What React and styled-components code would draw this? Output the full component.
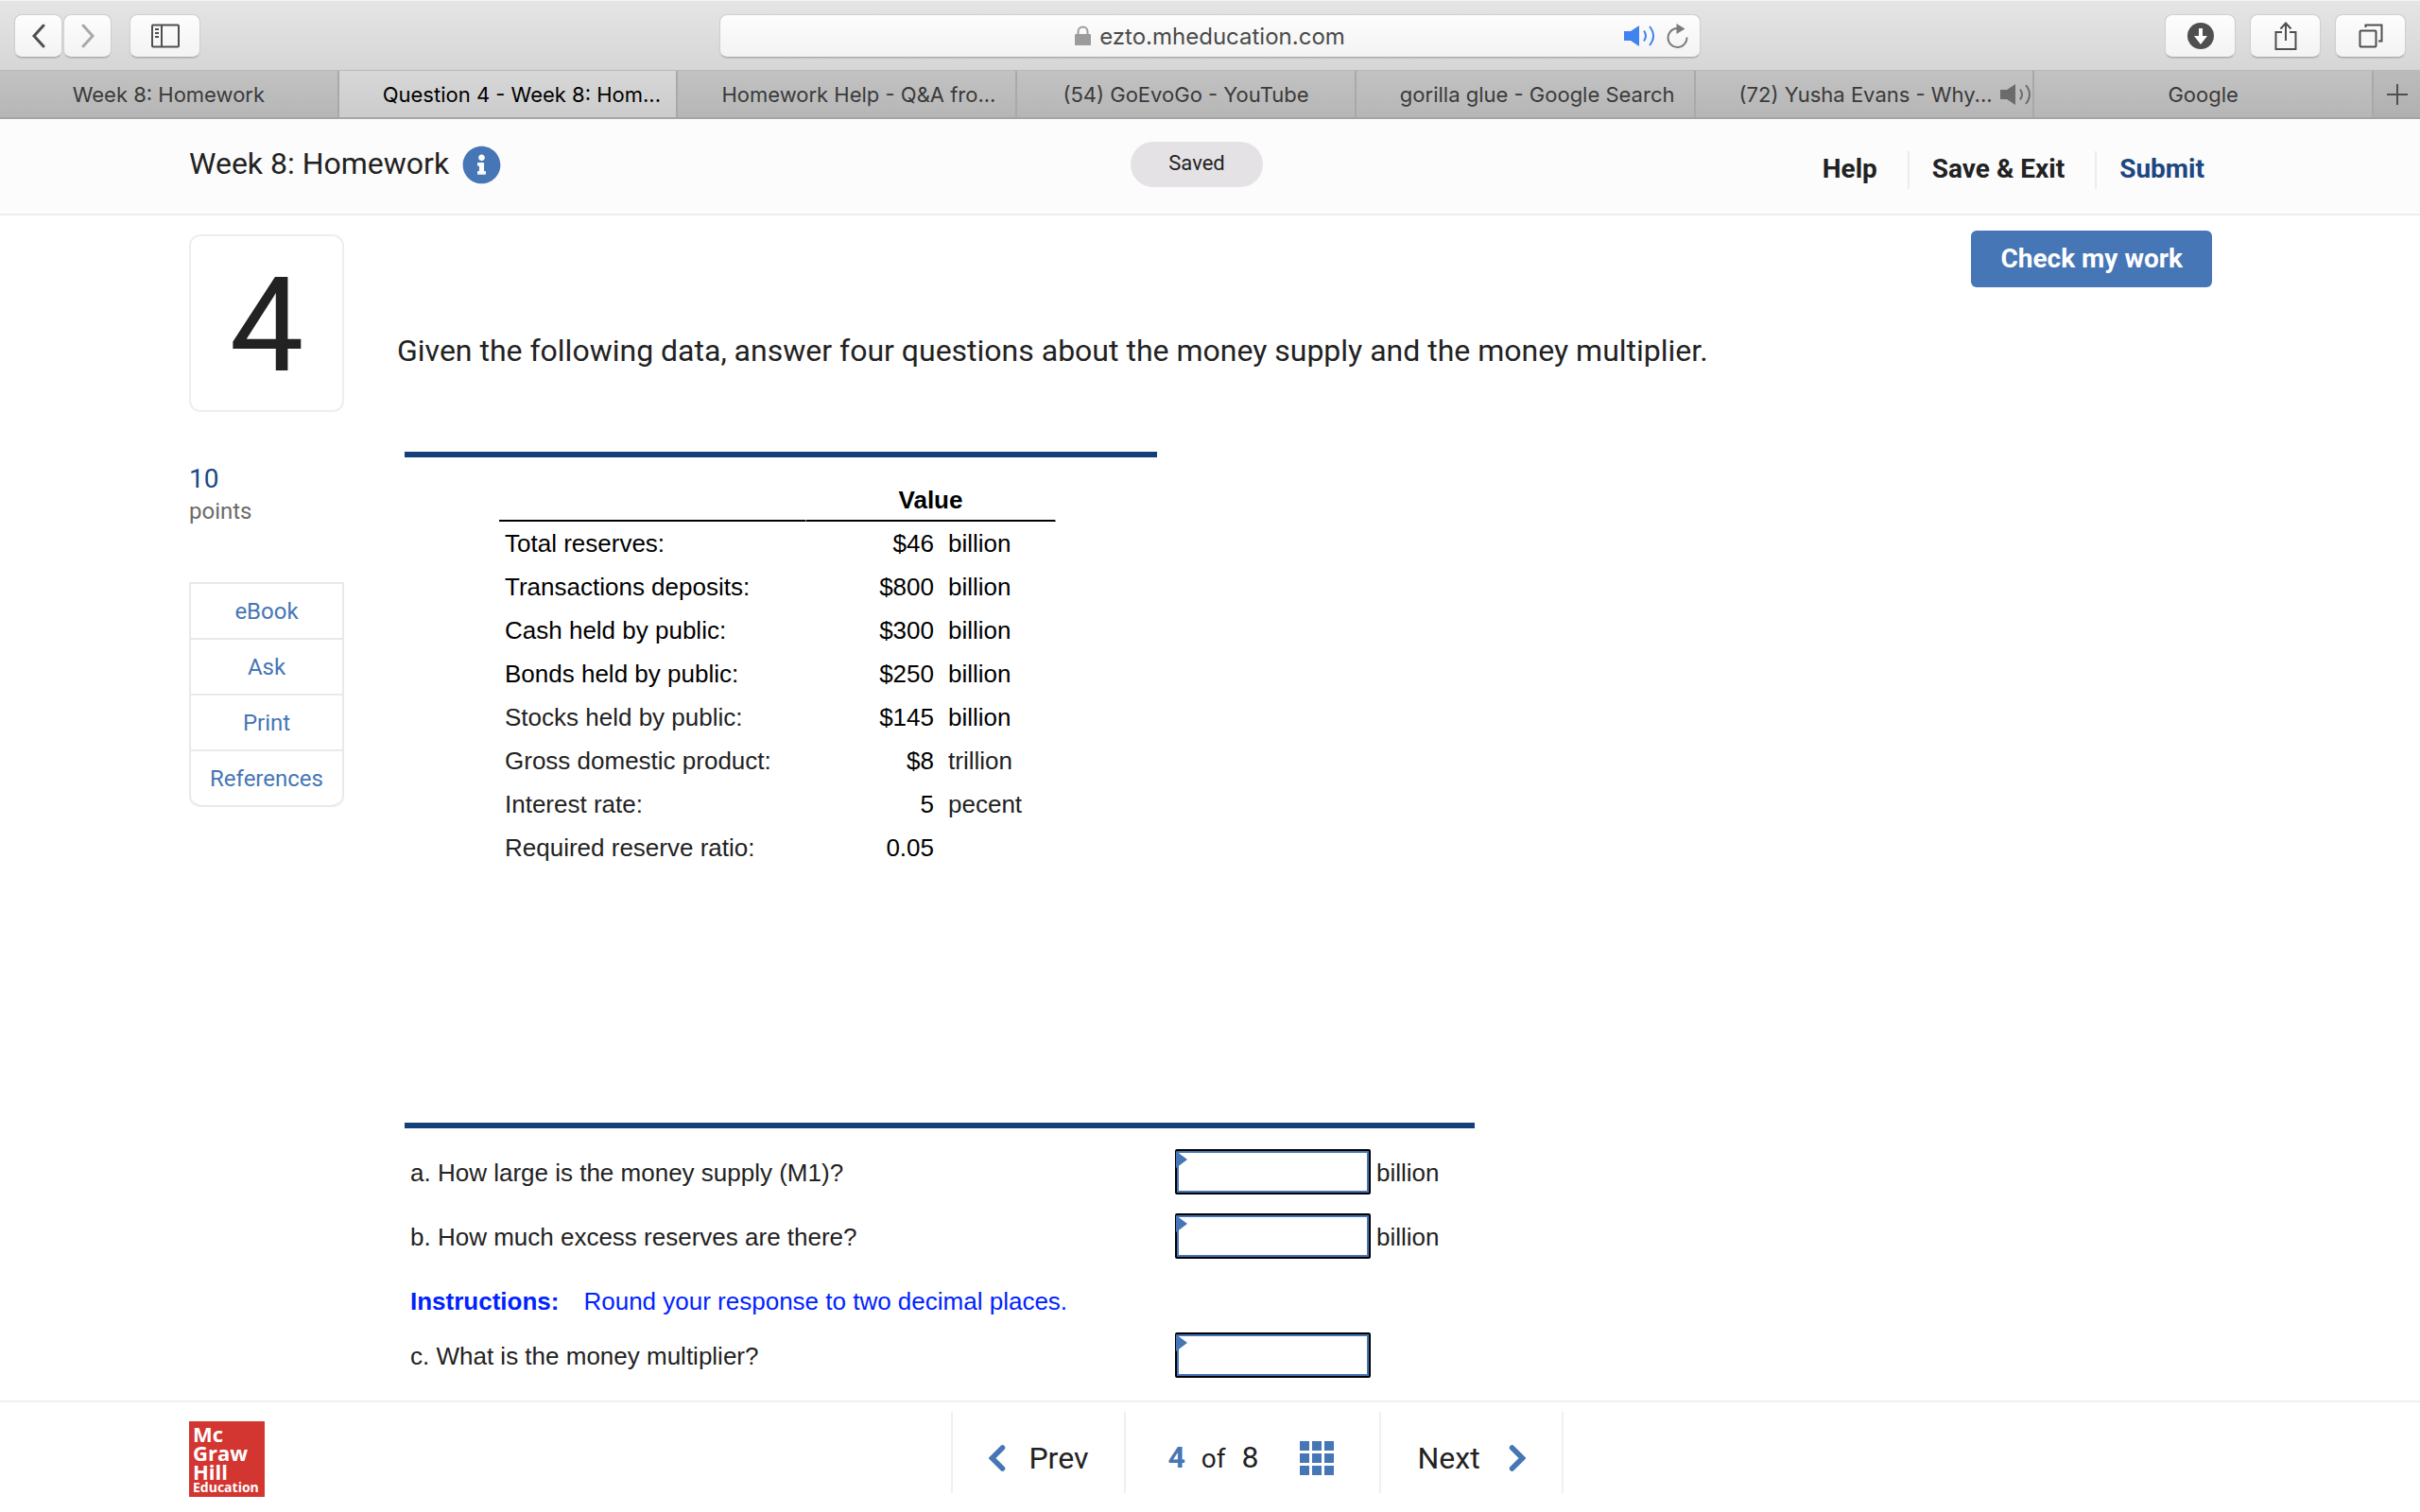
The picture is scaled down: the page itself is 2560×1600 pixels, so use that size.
import React from "react";
import styled, { createGlobalStyle, css } from "styled-components";
import { FaInfoCircle } from "react-icons/fa";

const GlobalStyle = createGlobalStyle`
  * {
    box-sizing: border-box;
  }

  body {
    margin: 0;
    background: #fff;
    color: #222;
    font-family: Roboto, "Liberation Sans", sans-serif;
  }

  button,
  input {
    font: inherit;
    color: inherit;
  }
`;

const Page = styled.div`
  display: flex;
  flex-direction: column;
  min-height: 100vh;
`;

/* ---------- browser bar ---------- */

const Toolbar = styled.div`
  display: grid;
  grid-template-columns: 1fr 41% 1fr;
  align-items: center;
  height: 75px;
  padding: 0 15px;
  background: linear-gradient(#e5e5e5, #d6d6d6);
  border-top: 1px solid #f4f4f4;
  border-bottom: 1px solid #b9b9b9;
  font-family: Inter, sans-serif;
`;

const ToolGroup = styled.div`
  display: flex;
  gap: ${(props) => props.$gap};
  justify-content: ${(props) => (props.$end ? "flex-end" : "flex-start")};
`;

const raised = css`
  height: 46px;
  background: linear-gradient(#fdfdfd, #f3f3f3);
  border: 1px solid #cfcfcf;
  border-bottom-color: #a8a8a8;
  border-radius: 8px;
  box-shadow: 0 1px 1px rgba(0, 0, 0, 0.1);
`;

const ToolButton = styled.button`
  ${raised}
  display: flex;
  align-items: center;
  justify-content: center;
  width: ${(props) => (props.$narrow ? "51px" : "75px")};
  padding: 0;
  color: ${(props) => (props.$dim ? "#a9a9a9" : "#4f4f4f")};
`;

const AddressBar = styled.div`
  ${raised}
  display: grid;
  grid-template-columns: 1fr auto 1fr;
  align-items: center;
  padding: 0 12px;
  font-size: 24px;
  color: #4a4a4a;
`;

const Address = styled.div`
  display: flex;
  grid-column: 2;
  align-items: center;
  gap: 9px;

  span {
    padding-top: 2px;
  }
`;

const AddressTools = styled.div`
  display: flex;
  align-items: center;
  justify-content: flex-end;
  gap: 12px;
`;

const TabBar = styled.div`
  display: grid;
  grid-template-columns: repeat(7, minmax(0, 1fr)) 49px;
  height: 51px;
  background: linear-gradient(#c2c2c2, #b6b6b6);
  border-bottom: 2px solid #a5a5a5;
  font: 22px Inter, sans-serif;
  color: #3a3a3a;
`;

const Tab = styled.a`
  display: flex;
  align-items: center;
  justify-content: ${(props) => (props.$long ? "flex-start" : "center")};
  gap: 8px;
  padding-left: ${(props) => (props.$long ? "46px" : "0")};
  border-right: 2px solid #a9a9a9;
  color: inherit;
  text-decoration: none;
  white-space: nowrap;
  overflow: hidden;

  ${(props) =>
    props.$active &&
    css`
      background: linear-gradient(#d7d7d7, #cccccc);
      color: #000;
    `}
`;

const NewTab = styled.button`
  display: flex;
  align-items: center;
  justify-content: center;
  padding: 0;
  background: rgba(0, 0, 0, 0.03);
  border: 0;
  color: #4f4f4f;
`;

/* ---------- assignment header ---------- */

const Header = styled.header`
  display: grid;
  grid-template-columns: 1fr auto 1fr;
  align-items: start;
  height: 102px;
  padding: 24px 228px 0 200px;
  background: #fcfcfc;
  border-bottom: 2px solid #eeeeee;
`;

const TitleGroup = styled.div`
  display: flex;
  align-items: center;
  gap: 14px;
  height: 48px;

  h1 {
    margin: 0;
    padding-bottom: 2px;
    font-size: 32px;
    font-weight: 400;
    line-height: 46px;
  }
`;

const InfoButton = styled.button`
  display: flex;
  padding: 0;
  background: none;
  border: 0;
  color: #4676b5;
`;

const Saved = styled.span`
  height: 48px;
  padding: 0 40px;
  background: #e4e2e5;
  border-radius: 24px;
  font-size: 22px;
  line-height: 46px;
`;

const HeaderNav = styled.nav`
  display: flex;
  align-items: center;
  justify-content: flex-end;
  height: 60px;
`;

const HeaderLink = styled.a`
  height: 40px;
  padding: 0 32px 0 24px;
  color: ${(props) => (props.$primary ? "#1c4782" : "#222")};
  font-size: 28px;
  font-weight: 700;
  line-height: 38px;
  text-decoration: none;

  & + & {
    border-left: 2px solid #ececec;
  }

  &:last-child {
    padding-right: 0;
  }
`;

/* ---------- question ---------- */

const Main = styled.main`
  display: flex;
  flex: 1;
  gap: 56px;
  padding: 0 220px 24px 200px;
`;

const Side = styled.aside`
  flex: none;
  width: 164px;
  padding-top: 20px;
`;

const QuestionNumber = styled.div`
  height: 188px;
  border: 2px solid #eeeeee;
  border-radius: 12px;
  font-size: 140px;
  line-height: 188px;
  text-align: center;
`;

const Points = styled.div`
  display: flex;
  flex-direction: column;
  margin: 54px 0 58px;
  font-size: 24px;
  line-height: 34px;
  color: #6b6b6b;

  strong {
    font-size: 28px;
    font-weight: 400;
    color: #1c4782;
  }
`;

const SideMenu = styled.nav`
  border: 2px solid #e9e9e9;
  border-bottom: 0;
  border-radius: 0 0 12px 12px;
`;

const SideLink = styled.a`
  display: block;
  height: 59px;
  border-bottom: 2px solid #e9e9e9;
  color: #4676b5;
  font-size: 24px;
  line-height: 58px;
  text-align: center;
  text-decoration: none;

  &:last-child {
    border-radius: 0 0 12px 12px;
  }
`;

const Content = styled.section`
  flex: 1;
  font: 26px "Liberation Sans", Arial, sans-serif;
`;

const Actions = styled.div`
  display: flex;
  justify-content: flex-end;
  padding-top: 16px;
`;

const CheckButton = styled.button`
  height: 60px;
  padding: 0 31px 2px;
  background: #4676b5;
  border: 0;
  border-radius: 6px;
  color: #fff;
  font: 700 28px Roboto, sans-serif;
`;

const Prompt = styled.p`
  margin: 43px 0 83px;
  font: 32px/48px Roboto, sans-serif;
`;

const Rule = styled.hr`
  width: 100%;
  max-width: ${(props) => props.$width};
  height: 6px;
  margin: 0 0 0 8px;
  background: #143f7a;
  border: 0;
`;

const DataTable = styled.table`
  width: 589px;
  margin: 22px 0 268px 108px;
  border-spacing: 0;
  table-layout: fixed;
  color: #000;

  th,
  td {
    height: 46px;
    padding: 0;
    text-align: left;
  }

  thead th {
    padding-top: 2px;
    border-right: 1px solid #fff;
    border-bottom: 2px solid #000;
    text-align: center;
  }
`;

const RowLabel = styled.th`
  && {
    padding-left: 6px;
    font-weight: 400;
    color: ${(props) => (props.$soft ? "#222" : "#000")};
  }
`;

const Amount = styled.td`
  && {
    padding-right: 7px;
    text-align: right;
  }
`;

const Unit = styled.td`
  && {
    padding-left: 8px;
    color: ${(props) => (props.$soft ? "#222" : "#000")};
  }
`;

const Answers = styled.form`
  padding: 12px 0 0 14px;
`;

const AnswerRow = styled.div`
  display: flex;
  align-items: center;
  height: ${(props) => (props.$last ? "48px" : "68px")};
`;

const AnswerLabel = styled.label`
  width: 809px;
  padding-top: 2px;
`;

const AnswerUnit = styled.span`
  padding: 2px 0 0 6px;
`;

const Instructions = styled.p`
  display: flex;
  align-items: center;
  gap: 26px;
  height: 68px;
  margin: 0;
  padding-top: 2px;
  color: #0022ff;
`;

const Answer = styled.span`
  position: relative;

  /* blue flag in the corner of each blank */
  &::before {
    content: "";
    position: absolute;
    top: 2px;
    left: 1px;
    border: solid transparent;
    border-width: 9px 0 9px 12px;
    border-left-color: #4676b5;
  }

  input {
    display: block;
    width: 207px;
    height: 48px;
    padding: 0 12px;
    background: #fff;
    border: 2px solid #000;
    border-radius: 2px;
    box-shadow: inset 0 0 0 2px #4676b5;
    outline: 0;
  }
`;

/* ---------- footer ---------- */

const Footer = styled.footer`
  display: flex;
  align-items: flex-start;
  height: 118px;
  padding: 10px 180px 0 200px;
  border-top: 2px solid #f0f0f0;
`;

const Logo = styled.div`
  display: flex;
  flex-direction: column;
  width: 80px;
  height: 80px;
  margin-top: 10px;
  padding: 3px 0 0 4px;
  background: #d33531;
  color: #fff;
  font: 700 22px/20px "Open Sans", sans-serif;

  small {
    font-size: 14px;
    line-height: 14px;
  }
`;

const Pager = styled.nav`
  display: flex;
  flex: 1;
  justify-content: center;
`;

const PagerCell = styled.div`
  display: flex;
  align-items: center;
  gap: ${(props) => props.$gap};
  height: 86px;
  padding: 12px 38px 0;
  border-left: 2px solid #f0f0f0;
  font-size: 32px;

  &:last-child {
    border-right: 2px solid #f0f0f0;
  }
`;

const PagerLink = styled(PagerCell).attrs({ as: "a", href: "#" })`
  color: inherit;
  text-decoration: none;
`;

const Position = styled.span`
  display: flex;
  align-items: baseline;
  gap: 17px;
  padding: 0 0 2px 6px;

  b {
    color: #4676b5;
  }

  small {
    font-size: 28px;
  }
`;

const GridButton = styled.button`
  display: flex;
  margin-right: 10px;
  padding: 0;
  background: none;
  border: 0;
`;

/* ---------- icons ---------- */

const Arrow = ({ right }) => (
  <svg width="16" height="26" viewBox="0 0 16 26" fill="none" stroke="currentColor" strokeWidth="3">
    <path d={right ? "M3 2l10 11L3 24" : "M13 2L3 13l10 11"} strokeLinecap="round" />
  </svg>
);

const SidebarIcon = () => (
  <svg width="30" height="26" viewBox="0 0 30 26" fill="none" stroke="currentColor" strokeWidth="2">
    <rect x="1" y="1.5" width="28" height="23" rx="1" />
    <path d="M11 1.5v23M4 6h4M4 10h4M4 14h4" />
  </svg>
);

const DownloadIcon = () => (
  <svg width="28" height="28" viewBox="0 0 28 28">
    <circle cx="14" cy="14" r="14" fill="#4f4f4f" />
    <path d="M12 6h4v8h5l-7 9-7-9h5z" fill="#fff" />
  </svg>
);

const ShareIcon = () => (
  <svg width="24" height="30" viewBox="0 0 24 30" fill="none" stroke="currentColor" strokeWidth="2">
    <path d="M8 11H1.5v18h21V11H16M12 20V2M6.5 7.5L12 1.5l5.5 6" />
  </svg>
);

const WindowsIcon = () => (
  <svg width="26" height="26" viewBox="0 0 26 26" fill="none" stroke="currentColor" strokeWidth="2">
    <rect x="1.5" y="7.5" width="17" height="17" rx="1" />
    <path d="M7.5 4V1.5h17v17H21" />
  </svg>
);

const LockIcon = () => (
  <svg width="17" height="22" viewBox="0 0 17 22">
    <rect y="9" width="17" height="12" rx="1" fill="#9b9b9b" />
    <path d="M3.5 10V6.500a5 5 0 0 1 10 0V10" fill="none" stroke="#9b9b9b" strokeWidth="2" />
  </svg>
);

const SoundIcon = ({ color }) => (
  <svg width="33" height="24" viewBox="0 0 33 24" fill="none" stroke={color} strokeWidth="2">
    <path d="M0 7h7l9-6v22l-9-6H0z" fill={color} stroke="none" />
    <path d="M21 6.500q4 5.500 0 11M27 2q8 10 0 20" />
  </svg>
);

const ReloadIcon = () => (
  <svg width="23" height="26" viewBox="0 0 23 26">
    <path d="M11 5a10 10 0 1 0 10.500 9.500" fill="none" stroke="#7b7b7b" strokeWidth="2" />
    <path d="M10.500 0l9 5.500-9 5.500z" fill="#7b7b7b" />
  </svg>
);

const PlusIcon = () => (
  <svg width="22" height="22" viewBox="0 0 22 22" stroke="currentColor" strokeWidth="2">
    <path d="M11 0v22M0 11h22" />
  </svg>
);

const Chevron = ({ right }) => (
  <svg width="18" height="28" viewBox="0 0 18 28" fill="none" stroke="#4676b5" strokeWidth="5.5">
    <path d={right ? "M3.500 3L14.500 14 3.500 25" : "M14.500 3L3.500 14l11 11"} strokeLinecap="round" />
  </svg>
);

const GridIcon = () => (
  <svg width="36" height="36" viewBox="0 0 36 36" fill="#4676b5">
    {[0, 13, 26].map((y) => [0, 13, 26].map((x) => <rect key={`${x}-${y}`} x={x} y={y} width="10" height="10" />))}
  </svg>
);

/* ---------- data ---------- */

const tabs = [
  { title: "Week 8: Homework" },
  { title: "Question 4 - Week 8: Hom...", long: true, active: true },
  { title: "Homework Help - Q&A fro...", long: true },
  { title: "(54) GoEvoGo - YouTube" },
  { title: "gorilla glue - Google Search", long: true },
  { title: "(72) Yusha Evans - Why...", long: true, sound: true },
  { title: "Google" },
];

const rows = [
  { label: "Total reserves:", amount: "$46", unit: "billion" },
  { label: "Transactions deposits:", amount: "$800", unit: "billion" },
  { label: "Cash held by public:", amount: "$300", unit: "billion" },
  { label: "Bonds held by public:", amount: "$250", unit: "billion" },
  { label: "Stocks held by public:", amount: "$145", unit: "billion", softLabel: true },
  { label: "Gross domestic product:", amount: "$8", unit: "trillion", softLabel: true, softUnit: true },
  { label: "Interest rate:", amount: "5", unit: "pecent", softLabel: true, softUnit: true },
  { label: "Required reserve ratio:", amount: "0.05", unit: "", softLabel: true },
];

const Question = ({ id, text, unit, last }) => (
  <AnswerRow $last={last}>
    <AnswerLabel htmlFor={id}>{text}</AnswerLabel>
    <Answer>
      <input id={id} type="text" />
    </Answer>
    {unit && <AnswerUnit>{unit}</AnswerUnit>}
  </AnswerRow>
);

const App = () => (
  <Page>
    <GlobalStyle />

    <Toolbar>
      <ToolGroup $gap="19px">
        <ToolGroup $gap="1px">
          <ToolButton $narrow aria-label="Back"><Arrow /></ToolButton>
          <ToolButton $narrow $dim aria-label="Forward"><Arrow right /></ToolButton>
        </ToolGroup>
        <ToolButton aria-label="Sidebar"><SidebarIcon /></ToolButton>
      </ToolGroup>
      <AddressBar>
        <Address>
          <LockIcon />
          <span>ezto.mheducation.com</span>
        </Address>
        <AddressTools>
          <SoundIcon color="#3f82f0" />
          <ReloadIcon />
        </AddressTools>
      </AddressBar>
      <ToolGroup $gap="15px" $end>
        <ToolButton aria-label="Downloads"><DownloadIcon /></ToolButton>
        <ToolButton aria-label="Share"><ShareIcon /></ToolButton>
        <ToolButton aria-label="Show tabs"><WindowsIcon /></ToolButton>
      </ToolGroup>
    </Toolbar>

    <TabBar>
      {tabs.map((tab) => (
        <Tab key={tab.title} href="#" $long={tab.long} $active={tab.active}>
          <span>{tab.title}</span>
          {tab.sound && <SoundIcon color="#6b6b6b" />}
        </Tab>
      ))}
      <NewTab aria-label="New tab"><PlusIcon /></NewTab>
    </TabBar>

    <Header>
      <TitleGroup>
        <h1>Week 8: Homework</h1>
        <InfoButton aria-label="Assignment info"><FaInfoCircle size={41} /></InfoButton>
      </TitleGroup>
      <Saved>Saved</Saved>
      <HeaderNav>
        <HeaderLink href="#">Help</HeaderLink>
        <HeaderLink href="#">Save &amp; Exit</HeaderLink>
        <HeaderLink href="#" $primary>Submit</HeaderLink>
      </HeaderNav>
    </Header>

    <Main>
      <Side>
        <QuestionNumber>4</QuestionNumber>
        <Points>
          <strong>10</strong>
          <span>points</span>
        </Points>
        <SideMenu>
          <SideLink href="#">eBook</SideLink>
          <SideLink href="#">Ask</SideLink>
          <SideLink href="#">Print</SideLink>
          <SideLink href="#">References</SideLink>
        </SideMenu>
      </Side>

      <Content>
        <Actions>
          <CheckButton>Check my work</CheckButton>
        </Actions>
        <Prompt>
          Given the following data, answer four questions about the money supply and the money multiplier.
        </Prompt>

        <Rule $width="796px" />
        <DataTable>
          <colgroup>
            <col width="325" />
            <col width="142" />
            <col width="122" />
          </colgroup>
          <thead>
            <tr>
              <th aria-label="Item" />
              <th colSpan="2">Value</th>
            </tr>
          </thead>
          <tbody>
            {rows.map((row) => (
              <tr key={row.label}>
                <RowLabel scope="row" $soft={row.softLabel}>{row.label}</RowLabel>
                <Amount>{row.amount}</Amount>
                <Unit $soft={row.softUnit}>{row.unit}</Unit>
              </tr>
            ))}
          </tbody>
        </DataTable>

        <Rule $width="1132px" />
        <Answers>
          <Question id="m1" text="a. How large is the money supply (M1)?" unit="billion" />
          <Question id="excess" text="b. How much excess reserves are there?" unit="billion" />
          <Instructions>
            <strong>Instructions:</strong>
            <span>Round your response to two decimal places.</span>
          </Instructions>
          <Question id="multiplier" text="c. What is the money multiplier?" last />
        </Answers>
      </Content>
    </Main>

    <Footer>
      <Logo>
        <span>Mc</span>
        <span>Graw</span>
        <span>Hill</span>
        <small>Education</small>
      </Logo>
      <Pager>
        <PagerLink $gap="24px">
          <Chevron />
          Prev
        </PagerLink>
        <PagerCell $gap="44px">
          <Position>
            <b>4</b>
            <small>of</small>
            <span>8</span>
          </Position>
          <GridButton aria-label="All questions"><GridIcon /></GridButton>
        </PagerCell>
        <PagerLink $gap="30px">
          Next
          <Chevron right />
        </PagerLink>
      </Pager>
    </Footer>
  </Page>
);

export default App;
